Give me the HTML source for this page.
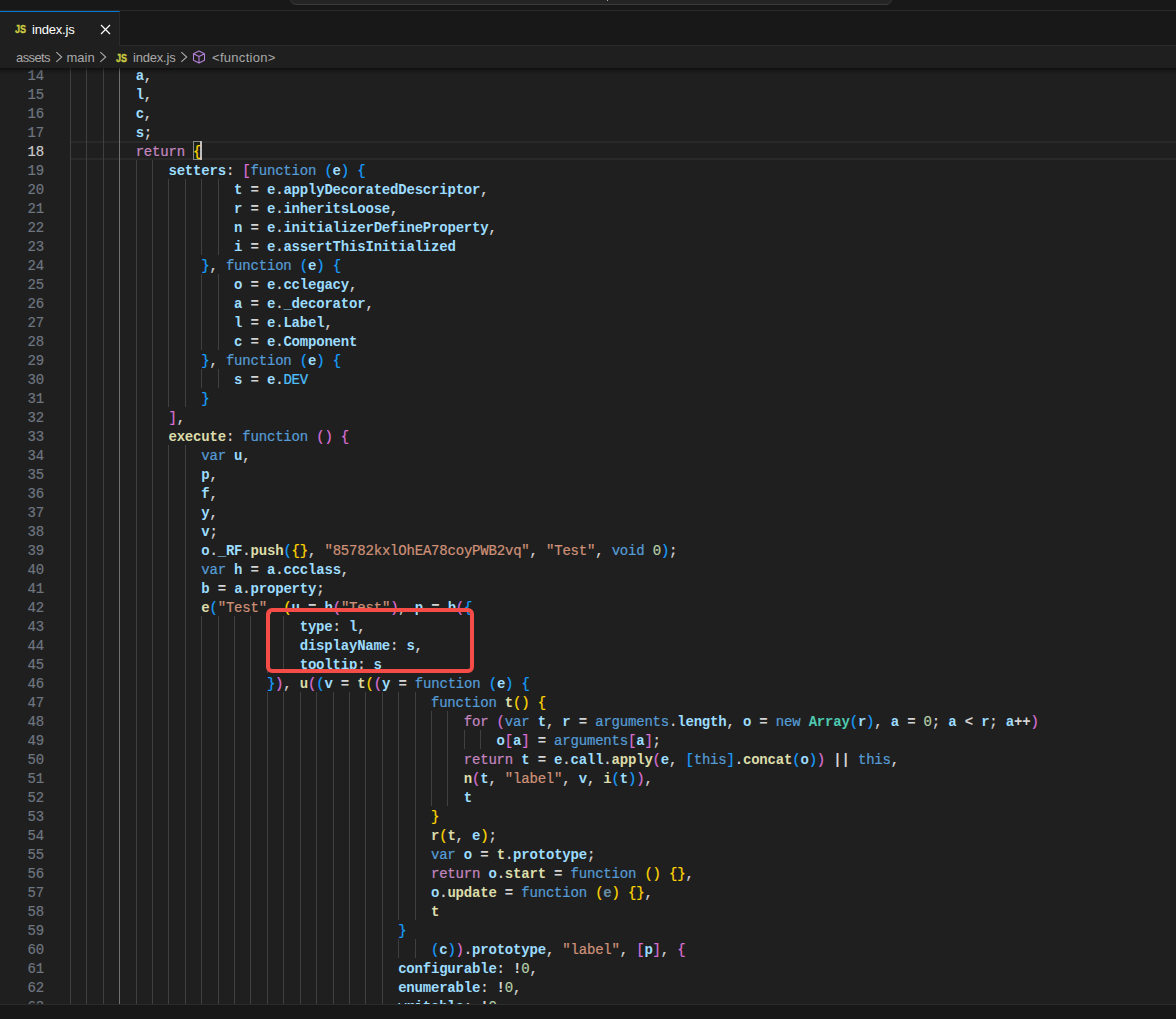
<!DOCTYPE html>
<html><head><meta charset="utf-8"><title>index.js</title>
<style>
*{box-sizing:border-box;margin:0;padding:0}
html,body{width:1176px;height:1019px;overflow:hidden;background:#1f1f1f}
body{position:relative;font-family:"Liberation Sans",sans-serif;font-size:13px;color:#ccc}
#title{position:absolute;left:0;top:0;width:1176px;height:11px;background:#181818;border-bottom:1px solid #2b2b2b}
#cc{position:absolute;left:290px;top:-20px;width:602px;height:25px;background:#242424;border:1px solid #3a3a3a;border-radius:6px}
#tabs{position:absolute;left:0;top:11px;width:1176px;height:35px;background:#181818;border-bottom:1px solid #2b2b2b}
#tab{position:absolute;left:0;top:0;width:120px;height:35px;background:#1f1f1f;border-top:1px solid #0078d4;border-right:1px solid #2b2b2b}
.js{position:absolute;font-family:"Liberation Sans",sans-serif;font-weight:bold;font-size:10.5px;line-height:11px;color:#cbcb41;-webkit-text-stroke:0.35px #cbcb41;transform:scaleX(.86);transform-origin:0 0}
.t{position:absolute;white-space:pre}
#bc{position:absolute;left:0;top:46px;width:1176px;height:22px;background:#1f1f1f;color:#a9a9a9}
#ed{position:absolute;left:0;top:68px;width:1176px;height:936px;overflow:hidden;background:#1f1f1f}
#shadow{position:absolute;left:0;top:0;width:1176px;height:6px;box-shadow:#000 0 6px 6px -6px inset;z-index:5}
#code{position:absolute;left:70px;top:0;right:0;bottom:0}
.l{position:absolute;left:0;height:19px;line-height:19px;white-space:pre;font-family:"Liberation Mono",monospace;font-size:14px;letter-spacing:-0.19824px;color:#d4d4d4;-webkit-text-stroke-width:0.22px}
.ln{position:absolute;left:-70px;width:44px;height:19px;line-height:19px;text-align:right;font-family:"Liberation Mono",monospace;font-size:14px;letter-spacing:-0.19824px;color:#6e7681;-webkit-text-stroke-width:0.2px}
.ln.a{color:#ccc}
.g{position:absolute;width:1px;background:#404040}
.ga{background:#707070}
.v{color:#9cdcfe;font-weight:bold;-webkit-text-stroke-width:0}
.f{color:#dcdcaa;font-weight:bold;-webkit-text-stroke-width:0}
.u{opacity:.6}
.k{color:#569cd6}
.c{color:#c586c0}
.s{color:#ce9178}
.n{color:#b5cea8}
.t2{color:#4ec9b0;font-weight:bold;-webkit-text-stroke-width:0}
.d{color:#4fc1ff}
.o{font-weight:bold;-webkit-text-stroke-width:0}
#cur{position:absolute;left:0;top:73px;width:1106px;height:19px;border-top:2px solid #292929;border-bottom:2px solid #292929}
#bm{position:absolute;left:123px;top:73px;width:9px;height:19px;border:1px solid #888;background:#1a2119}
#caret{position:absolute;left:130px;top:73px;width:2px;height:19px;background:#bdbdbd}
#red{position:absolute;left:266px;top:608px;width:208px;height:65px;border:4px solid #f54c48;border-radius:6px;z-index:9}
#bot{position:absolute;left:0;top:1004px;width:1176px;height:15px;background:#181818;border-top:1px solid #2b2b2b}
</style></head><body>
<div id="title"><div id="cc"></div><div style="position:absolute;left:607px;top:0;width:1px;height:1px;background:#aaa"></div></div>
<div id="tabs"><div id="tab">
<span class="js" style="left:14.5px;top:12px">JS</span>
<span class="t" style="left:32px;top:10px;color:#fff;letter-spacing:-0.2px">index.js</span>
<svg style="position:absolute;left:99.7px;top:12.3px" width="11" height="11" viewBox="0 0 11 11"><path d="M1 1L10 10M10 1L1 10" stroke="#fff" stroke-width="1.2" fill="none"/></svg>
</div></div>
<div id="bc">
<span class="t" style="left:16px;top:4px;letter-spacing:-0.6px">assets</span>
<span class="t" style="left:66.5px;top:4px">main</span>
<span class="js" style="left:115.5px;top:7px">JS</span>
<span class="t" style="left:133px;top:4px;letter-spacing:-0.2px">index.js</span>
<span class="t" style="left:212px;top:4px;letter-spacing:0.3px">&lt;function&gt;</span>
<svg style="position:absolute;left:54px;top:5.2px" width="10" height="12" viewBox="0 0 10 12"><path d="M2.3 1.2L7.7 6L2.3 10.8" stroke="#a9a9a9" stroke-width="1.1" fill="none"/></svg>
<svg style="position:absolute;left:98px;top:5.2px" width="10" height="12" viewBox="0 0 10 12"><path d="M2.3 1.2L7.7 6L2.3 10.8" stroke="#a9a9a9" stroke-width="1.1" fill="none"/></svg>
<svg style="position:absolute;left:179.3px;top:5.2px" width="10" height="12" viewBox="0 0 10 12"><path d="M2.3 1.2L7.7 6L2.3 10.8" stroke="#a9a9a9" stroke-width="1.1" fill="none"/></svg>
<svg style="position:absolute;left:192.4px;top:4px" width="14" height="14" viewBox="0 0 14 14"><path d="M7 1L12.5 3.8V10.2L7 13L1.5 10.2V3.8ZM1.5 3.8L7 6.6L12.5 3.8M7 6.6V13" stroke="#b180d7" stroke-width="1.1" fill="none" stroke-linejoin="round"/></svg>
</div>
<div id="ed">
<div id="shadow"></div>
<div id="code">
<div id="cur"></div>
<div class="g" style="left:0.00px;top:-3px;height:950px"></div>
<div class="g" style="left:16.41px;top:-3px;height:950px"></div>
<div class="g" style="left:32.81px;top:-3px;height:950px"></div>
<div class="g ga" style="left:49.22px;top:-3px;height:950px"></div>
<div class="g" style="left:65.62px;top:92px;height:855px"></div>
<div class="g" style="left:82.03px;top:92px;height:855px"></div>
<div class="g" style="left:98.44px;top:111px;height:228px"></div>
<div class="g" style="left:98.44px;top:377px;height:570px"></div>
<div class="g" style="left:114.84px;top:111px;height:228px"></div>
<div class="g" style="left:114.84px;top:377px;height:570px"></div>
<div class="g" style="left:131.25px;top:111px;height:76px"></div>
<div class="g" style="left:131.25px;top:206px;height:76px"></div>
<div class="g" style="left:131.25px;top:301px;height:19px"></div>
<div class="g" style="left:131.25px;top:548px;height:399px"></div>
<div class="g" style="left:147.66px;top:111px;height:76px"></div>
<div class="g" style="left:147.66px;top:206px;height:76px"></div>
<div class="g" style="left:147.66px;top:301px;height:19px"></div>
<div class="g" style="left:147.66px;top:548px;height:399px"></div>
<div class="g" style="left:164.06px;top:548px;height:399px"></div>
<div class="g" style="left:180.47px;top:548px;height:399px"></div>
<div class="g" style="left:196.88px;top:548px;height:57px"></div>
<div class="g" style="left:196.88px;top:624px;height:323px"></div>
<div class="g" style="left:213.28px;top:548px;height:57px"></div>
<div class="g" style="left:213.28px;top:624px;height:323px"></div>
<div class="g" style="left:229.69px;top:624px;height:323px"></div>
<div class="g" style="left:246.09px;top:624px;height:323px"></div>
<div class="g" style="left:262.50px;top:624px;height:323px"></div>
<div class="g" style="left:278.91px;top:624px;height:323px"></div>
<div class="g" style="left:295.31px;top:624px;height:323px"></div>
<div class="g" style="left:311.72px;top:624px;height:323px"></div>
<div class="g" style="left:328.12px;top:624px;height:228px"></div>
<div class="g" style="left:328.12px;top:871px;height:19px"></div>
<div class="g" style="left:344.53px;top:624px;height:228px"></div>
<div class="g" style="left:344.53px;top:871px;height:19px"></div>
<div class="g" style="left:360.94px;top:643px;height:95px"></div>
<div class="g" style="left:377.34px;top:643px;height:95px"></div>
<div class="g" style="left:393.75px;top:662px;height:19px"></div>
<div class="g" style="left:410.16px;top:662px;height:19px"></div>
<div id="bm"></div><div id="caret"></div>
<div class="ln" style="top:-1px">14</div><div class="l" style="top:-1px">        <span class="v">a</span>,</div>
<div class="ln" style="top:18px">15</div><div class="l" style="top:18px">        <span class="v">l</span>,</div>
<div class="ln" style="top:37px">16</div><div class="l" style="top:37px">        <span class="v">c</span>,</div>
<div class="ln" style="top:56px">17</div><div class="l" style="top:56px">        <span class="v">s</span>;</div>
<div class="ln a" style="top:75px">18</div><div class="l" style="top:75px">        <span class="c">return</span> <span style="color:#FFD700">{</span></div>
<div class="ln" style="top:94px">19</div><div class="l" style="top:94px">            <span class="v">setters</span>: <span style="color:#DA70D6">[</span><span class="k">function</span> <span style="color:#179FFF">(</span><span class="v">e</span><span style="color:#179FFF">)</span> <span style="color:#179FFF">{</span></div>
<div class="ln" style="top:113px">20</div><div class="l" style="top:113px">                    <span class="v">t</span> <span class="o">=</span> <span class="v">e</span>.<span class="v">applyDecoratedDescriptor</span>,</div>
<div class="ln" style="top:132px">21</div><div class="l" style="top:132px">                    <span class="v">r</span> <span class="o">=</span> <span class="v">e</span>.<span class="v">inheritsLoose</span>,</div>
<div class="ln" style="top:151px">22</div><div class="l" style="top:151px">                    <span class="v">n</span> <span class="o">=</span> <span class="v">e</span>.<span class="v">initializerDefineProperty</span>,</div>
<div class="ln" style="top:170px">23</div><div class="l" style="top:170px">                    <span class="v">i</span> <span class="o">=</span> <span class="v">e</span>.<span class="v">assertThisInitialized</span></div>
<div class="ln" style="top:189px">24</div><div class="l" style="top:189px">                <span style="color:#179FFF">}</span>, <span class="k">function</span> <span style="color:#179FFF">(</span><span class="v">e</span><span style="color:#179FFF">)</span> <span style="color:#179FFF">{</span></div>
<div class="ln" style="top:208px">25</div><div class="l" style="top:208px">                    <span class="v">o</span> <span class="o">=</span> <span class="v">e</span>.<span class="v">cclegacy</span>,</div>
<div class="ln" style="top:227px">26</div><div class="l" style="top:227px">                    <span class="v">a</span> <span class="o">=</span> <span class="v">e</span>.<span class="v">_decorator</span>,</div>
<div class="ln" style="top:246px">27</div><div class="l" style="top:246px">                    <span class="v">l</span> <span class="o">=</span> <span class="v">e</span>.<span class="v">Label</span>,</div>
<div class="ln" style="top:265px">28</div><div class="l" style="top:265px">                    <span class="v">c</span> <span class="o">=</span> <span class="v">e</span>.<span class="v">Component</span></div>
<div class="ln" style="top:284px">29</div><div class="l" style="top:284px">                <span style="color:#179FFF">}</span>, <span class="k">function</span> <span style="color:#179FFF">(</span><span class="v">e</span><span style="color:#179FFF">)</span> <span style="color:#179FFF">{</span></div>
<div class="ln" style="top:303px">30</div><div class="l" style="top:303px">                    <span class="v">s</span> <span class="o">=</span> <span class="v">e</span>.<span class="d">DEV</span></div>
<div class="ln" style="top:322px">31</div><div class="l" style="top:322px">                <span style="color:#179FFF">}</span></div>
<div class="ln" style="top:341px">32</div><div class="l" style="top:341px">            <span style="color:#DA70D6">]</span>,</div>
<div class="ln" style="top:360px">33</div><div class="l" style="top:360px">            <span class="f">execute</span>: <span class="k">function</span> <span style="color:#DA70D6">(</span><span style="color:#DA70D6">)</span> <span style="color:#DA70D6">{</span></div>
<div class="ln" style="top:379px">34</div><div class="l" style="top:379px">                <span class="k">var</span> <span class="v">u</span>,</div>
<div class="ln" style="top:398px">35</div><div class="l" style="top:398px">                <span class="v">p</span>,</div>
<div class="ln" style="top:417px">36</div><div class="l" style="top:417px">                <span class="v">f</span>,</div>
<div class="ln" style="top:436px">37</div><div class="l" style="top:436px">                <span class="v">y</span>,</div>
<div class="ln" style="top:455px">38</div><div class="l" style="top:455px">                <span class="v">v</span>;</div>
<div class="ln" style="top:474px">39</div><div class="l" style="top:474px">                <span class="v">o</span>.<span class="v">_RF</span>.<span class="f">push</span><span style="color:#179FFF">(</span><span style="color:#FFD700">{</span><span style="color:#FFD700">}</span>, <span class="s">"85782kxlOhEA78coyPWB2vq"</span>, <span class="s">"Test"</span>, <span class="k">void</span> <span class="n">0</span><span style="color:#179FFF">)</span>;</div>
<div class="ln" style="top:493px">40</div><div class="l" style="top:493px">                <span class="k">var</span> <span class="v">h</span> <span class="o">=</span> <span class="v">a</span>.<span class="v">ccclass</span>,</div>
<div class="ln" style="top:512px">41</div><div class="l" style="top:512px">                <span class="v">b</span> <span class="o">=</span> <span class="v">a</span>.<span class="v">property</span>;</div>
<div class="ln" style="top:531px">42</div><div class="l" style="top:531px">                <span class="f">e</span><span style="color:#179FFF">(</span><span class="s">"Test"</span>, <span style="color:#FFD700">(</span><span class="v">u</span> <span class="o">=</span> <span class="v">h</span><span style="color:#DA70D6">(</span><span class="s">"Test"</span><span style="color:#DA70D6">)</span>, <span class="v">p</span> <span class="o">=</span> <span class="v">b</span><span style="color:#DA70D6">(</span><span style="color:#179FFF">{</span></div>
<div class="ln" style="top:550px">43</div><div class="l" style="top:550px">                            <span class="v">type</span>: <span class="v">l</span>,</div>
<div class="ln" style="top:569px">44</div><div class="l" style="top:569px">                            <span class="v">displayName</span>: <span class="v">s</span>,</div>
<div class="ln" style="top:588px">45</div><div class="l" style="top:588px">                            <span class="v">tooltip</span>: <span class="v">s</span></div>
<div class="ln" style="top:607px">46</div><div class="l" style="top:607px">                        <span style="color:#179FFF">}</span><span style="color:#DA70D6">)</span>, <span class="f">u</span><span style="color:#DA70D6">(</span><span style="color:#179FFF">(</span><span class="v">v</span> <span class="o">=</span> <span class="f">t</span><span style="color:#FFD700">(</span><span style="color:#DA70D6">(</span><span class="v">y</span> <span class="o">=</span> <span class="k">function</span> <span style="color:#179FFF">(</span><span class="v">e</span><span style="color:#179FFF">)</span> <span style="color:#179FFF">{</span></div>
<div class="ln" style="top:626px">47</div><div class="l" style="top:626px">                                            <span class="k">function</span> <span class="f">t</span><span style="color:#FFD700">(</span><span style="color:#FFD700">)</span> <span style="color:#FFD700">{</span></div>
<div class="ln" style="top:645px">48</div><div class="l" style="top:645px">                                                <span class="c">for</span> <span style="color:#DA70D6">(</span><span class="k">var</span> <span class="v">t</span>, <span class="v">r</span> <span class="o">=</span> <span class="k">arguments</span>.<span class="v">length</span>, <span class="v">o</span> <span class="o">=</span> <span class="k">new</span> <span class="t2">Array</span><span style="color:#179FFF">(</span><span class="v">r</span><span style="color:#179FFF">)</span>, <span class="v">a</span> <span class="o">=</span> <span class="n">0</span>; <span class="v">a</span> <span class="o">&lt;</span> <span class="v">r</span>; <span class="v">a</span><span class="o">++</span><span style="color:#DA70D6">)</span></div>
<div class="ln" style="top:664px">49</div><div class="l" style="top:664px">                                                    <span class="v">o</span><span style="color:#DA70D6">[</span><span class="v">a</span><span style="color:#DA70D6">]</span> <span class="o">=</span> <span class="k">arguments</span><span style="color:#DA70D6">[</span><span class="v">a</span><span style="color:#DA70D6">]</span>;</div>
<div class="ln" style="top:683px">50</div><div class="l" style="top:683px">                                                <span class="c">return</span> <span class="v">t</span> <span class="o">=</span> <span class="v">e</span>.<span class="v">call</span>.<span class="f">apply</span><span style="color:#DA70D6">(</span><span class="v">e</span>, <span style="color:#179FFF">[</span><span class="k">this</span><span style="color:#179FFF">]</span>.<span class="f">concat</span><span style="color:#179FFF">(</span><span class="v">o</span><span style="color:#179FFF">)</span><span style="color:#DA70D6">)</span> <span class="o">||</span> <span class="k">this</span>,</div>
<div class="ln" style="top:702px">51</div><div class="l" style="top:702px">                                                <span class="f">n</span><span style="color:#DA70D6">(</span><span class="v">t</span>, <span class="s">"label"</span>, <span class="v">v</span>, <span class="f">i</span><span style="color:#179FFF">(</span><span class="v">t</span><span style="color:#179FFF">)</span><span style="color:#DA70D6">)</span>,</div>
<div class="ln" style="top:721px">52</div><div class="l" style="top:721px">                                                <span class="v">t</span></div>
<div class="ln" style="top:740px">53</div><div class="l" style="top:740px">                                            <span style="color:#FFD700">}</span></div>
<div class="ln" style="top:759px">54</div><div class="l" style="top:759px">                                            <span class="f">r</span><span style="color:#FFD700">(</span><span class="f">t</span>, <span class="v">e</span><span style="color:#FFD700">)</span>;</div>
<div class="ln" style="top:778px">55</div><div class="l" style="top:778px">                                            <span class="k">var</span> <span class="v">o</span> <span class="o">=</span> <span class="f">t</span>.<span class="v">prototype</span>;</div>
<div class="ln" style="top:797px">56</div><div class="l" style="top:797px">                                            <span class="c">return</span> <span class="v">o</span>.<span class="f">start</span> <span class="o">=</span> <span class="k">function</span> <span style="color:#FFD700">(</span><span style="color:#FFD700">)</span> <span style="color:#FFD700">{</span><span style="color:#FFD700">}</span>,</div>
<div class="ln" style="top:816px">57</div><div class="l" style="top:816px">                                            <span class="v">o</span>.<span class="f">update</span> <span class="o">=</span> <span class="k">function</span> <span style="color:#FFD700">(</span><span class="v u">e</span><span style="color:#FFD700">)</span> <span style="color:#FFD700">{</span><span style="color:#FFD700">}</span>,</div>
<div class="ln" style="top:835px">58</div><div class="l" style="top:835px">                                            <span class="f">t</span></div>
<div class="ln" style="top:854px">59</div><div class="l" style="top:854px">                                        <span style="color:#179FFF">}</span></div>
<div class="ln" style="top:873px">60</div><div class="l" style="top:873px">                                            <span style="color:#179FFF">(</span><span class="v">c</span><span style="color:#179FFF">)</span><span style="color:#DA70D6">)</span>.<span class="v">prototype</span>, <span class="s">"label"</span>, <span style="color:#DA70D6">[</span><span class="v">p</span><span style="color:#DA70D6">]</span>, <span style="color:#DA70D6">{</span></div>
<div class="ln" style="top:892px">61</div><div class="l" style="top:892px">                                        <span class="v">configurable</span>: <span class="o">!</span><span class="n">0</span>,</div>
<div class="ln" style="top:911px">62</div><div class="l" style="top:911px">                                        <span class="v">enumerable</span>: <span class="o">!</span><span class="n">0</span>,</div>
<div class="ln" style="top:930px">63</div><div class="l" style="top:930px">                                        <span class="v">writable</span>: <span class="o">!</span><span class="n">0</span>,</div>
</div>
</div>
<div id="red"></div>
<div id="bot"></div>
</body></html>
